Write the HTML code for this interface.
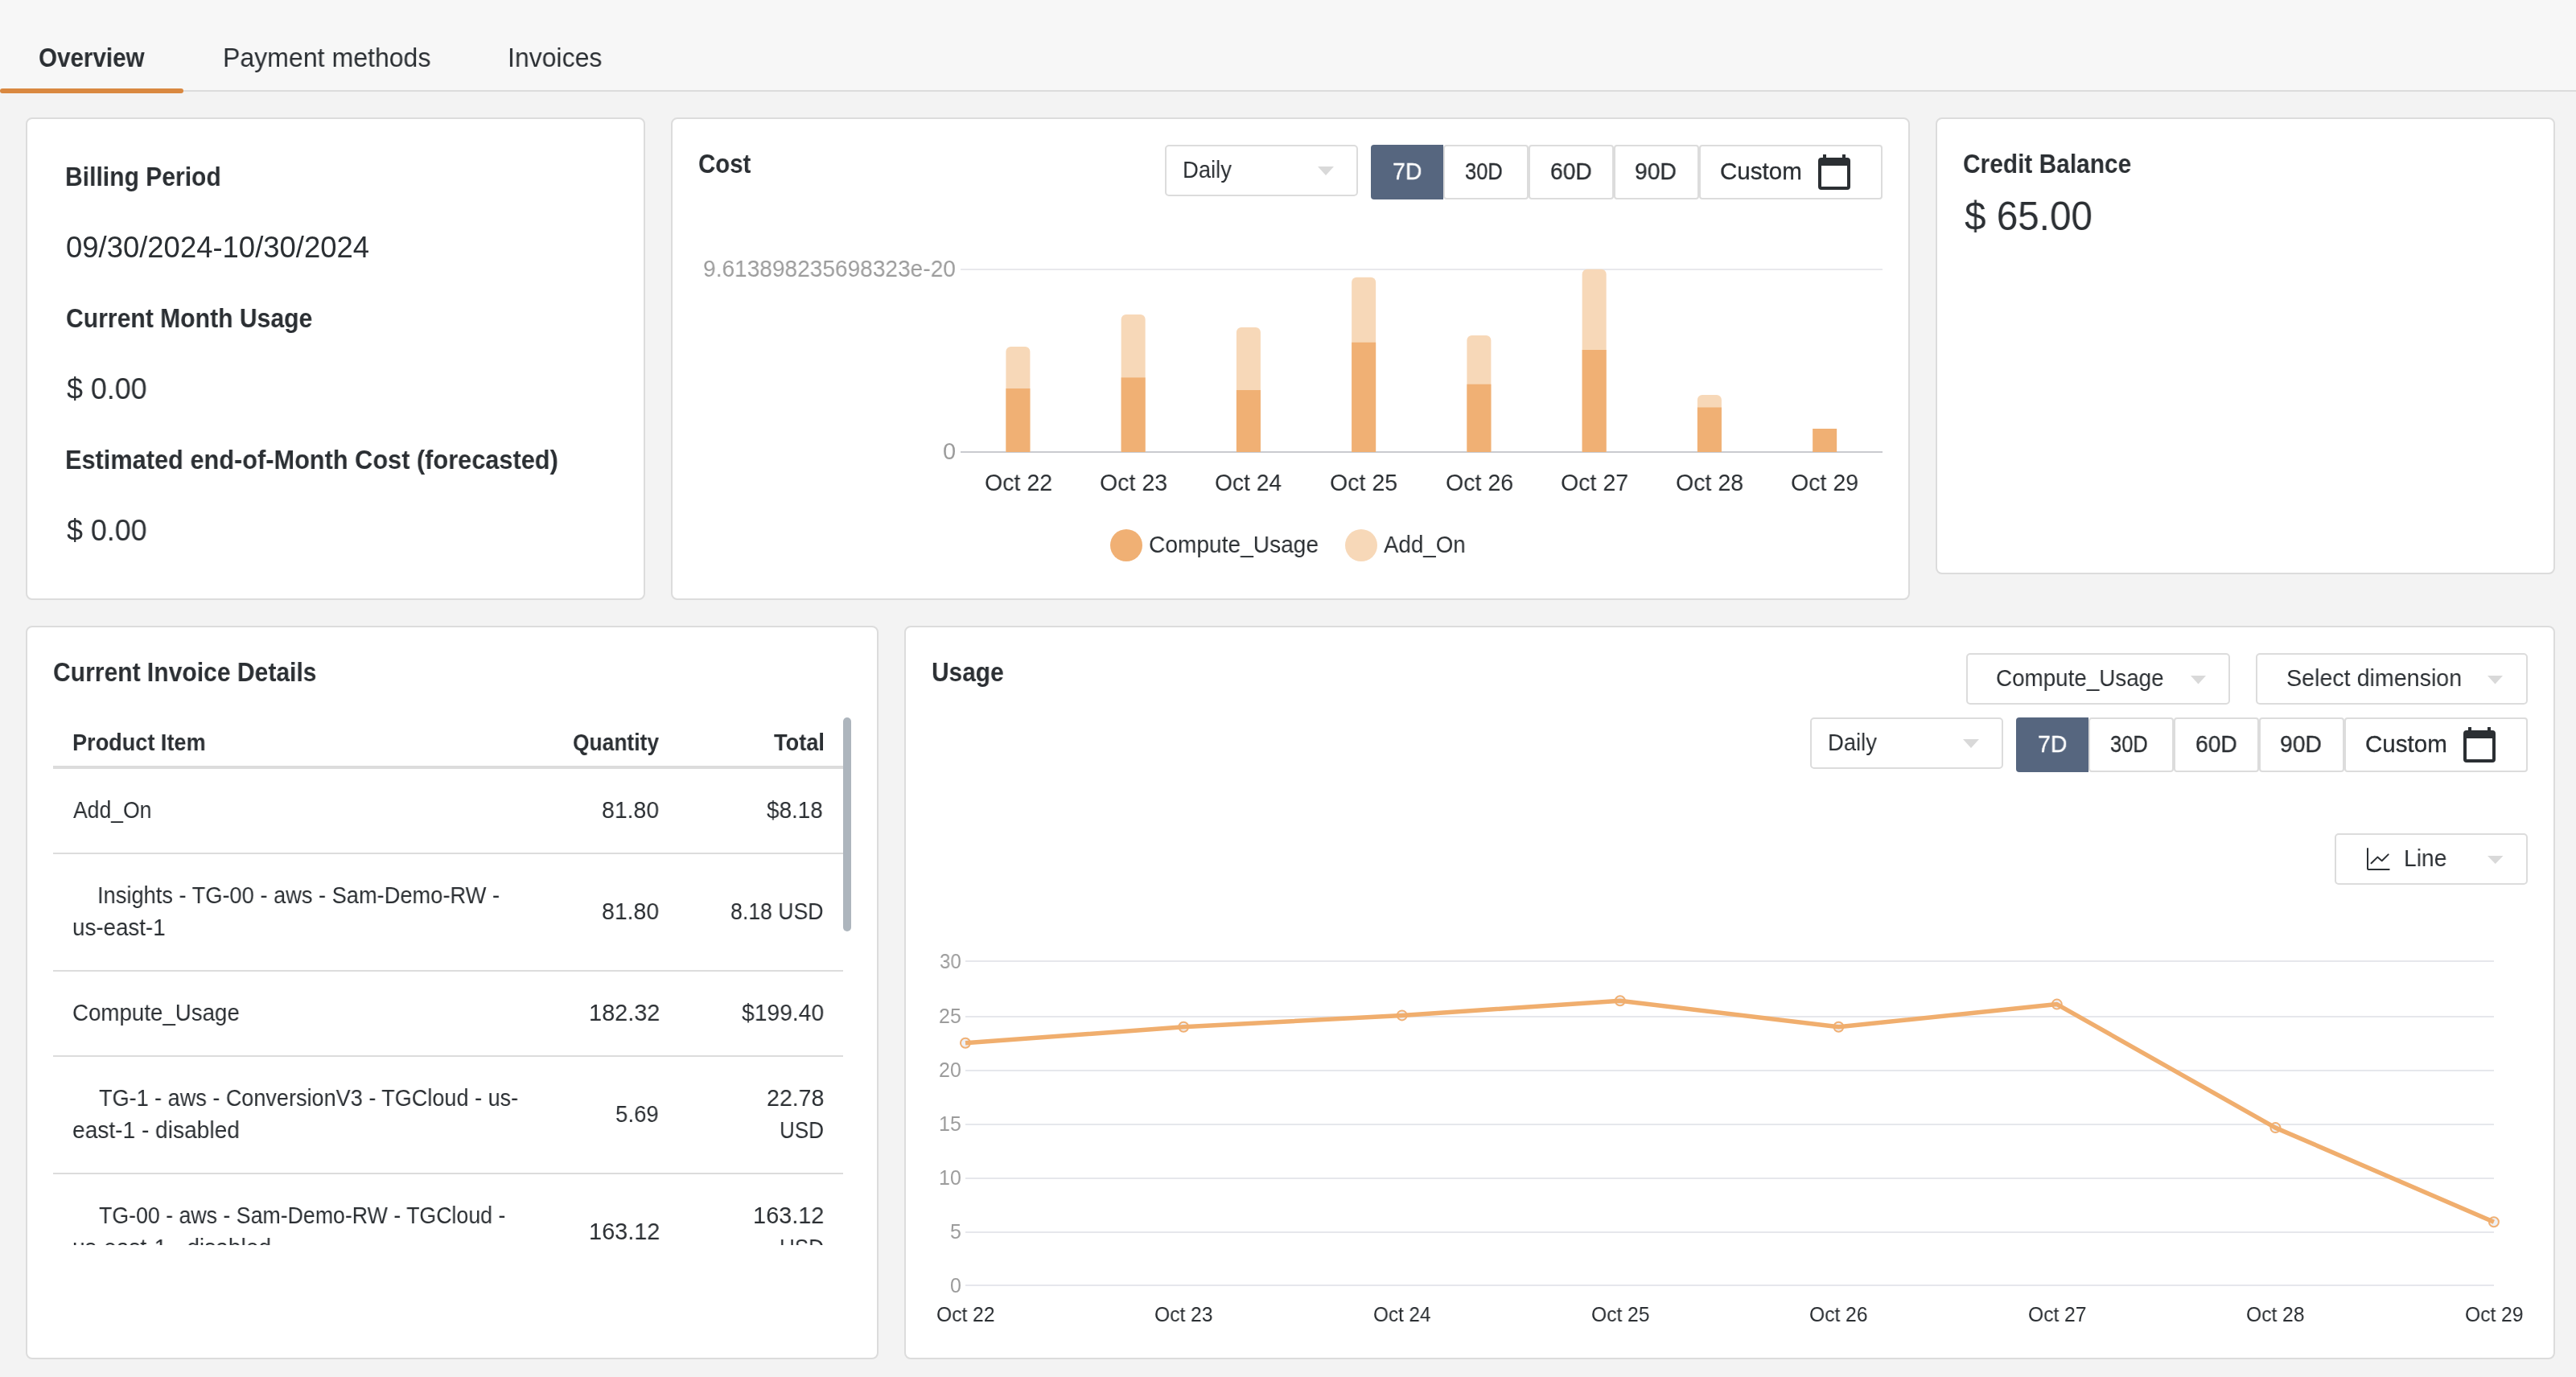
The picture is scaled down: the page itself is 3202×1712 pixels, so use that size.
<!DOCTYPE html>
<html><head><meta charset="utf-8"><title>Billing Overview</title>
<style>
html,body{margin:0;padding:0;width:3202px;height:1712px;overflow:hidden;background:#f3f3f3}
body{position:relative;font-family:"Liberation Sans",sans-serif}
.t{position:absolute;white-space:pre;line-height:1;transform-origin:0 0;will-change:transform}
</style></head><body>
<div style="position:absolute;left:0px;top:0px;width:3202px;height:112px;background:#f7f7f7"></div>
<div style="position:absolute;left:0px;top:112px;width:3202px;height:2px;background:#dcdcdc"></div>
<div style="position:absolute;left:0px;top:114px;width:3202px;height:1598px;background:#f3f3f3"></div>
<div style="position:absolute;left:0px;top:110px;width:228px;height:6px;background:#d98840;border-radius:3px"></div>
<div class="t" style="left:48.10px;top:55.00px;font-size:33px;font-weight:bold;color:#2b2f33;transform:scaleX(0.8967);">Overview</div>
<div class="t" style="left:276.66px;top:55.00px;font-size:33px;font-weight:normal;color:#2b2f33;transform:scaleX(0.9717);">Payment methods</div>
<div class="t" style="left:631.49px;top:55.00px;font-size:33px;font-weight:normal;color:#2b2f33;transform:scaleX(0.9697);">Invoices</div>
<div style="position:absolute;left:32px;top:146px;width:770px;height:600px;background:#fff;border:2px solid #dcdcdc;border-radius:8px;box-sizing:border-box"></div>
<div style="position:absolute;left:834px;top:146px;width:1540px;height:600px;background:#fff;border:2px solid #dcdcdc;border-radius:8px;box-sizing:border-box"></div>
<div style="position:absolute;left:2406px;top:146px;width:770px;height:568px;background:#fff;border:2px solid #dcdcdc;border-radius:8px;box-sizing:border-box"></div>
<div style="position:absolute;left:32px;top:778px;width:1060px;height:912px;background:#fff;border:2px solid #dcdcdc;border-radius:8px;box-sizing:border-box"></div>
<div style="position:absolute;left:1124px;top:778px;width:2052px;height:912px;background:#fff;border:2px solid #dcdcdc;border-radius:8px;box-sizing:border-box"></div>
<div class="t" style="left:81.18px;top:203.00px;font-size:33px;font-weight:bold;color:#2b2f33;transform:scaleX(0.9112);">Billing Period</div>
<div class="t" style="left:81.99px;top:290.00px;font-size:36px;font-weight:normal;color:#2b2f33;transform:scaleX(1.0126);">09/30/2024-10/30/2024</div>
<div class="t" style="left:82.09px;top:379.00px;font-size:33px;font-weight:bold;color:#2b2f33;transform:scaleX(0.9127);">Current Month Usage</div>
<div class="t" style="left:83.20px;top:466.00px;font-size:36px;font-weight:normal;color:#2b2f33;transform:scaleX(0.9953);">$ 0.00</div>
<div class="t" style="left:81.14px;top:555.00px;font-size:33px;font-weight:bold;color:#2b2f33;transform:scaleX(0.9310);">Estimated end-of-Month Cost (forecasted)</div>
<div class="t" style="left:83.20px;top:642.00px;font-size:36px;font-weight:normal;color:#2b2f33;transform:scaleX(0.9953);">$ 0.00</div>
<div class="t" style="left:868.11px;top:187.00px;font-size:33px;font-weight:bold;color:#2b2f33;transform:scaleX(0.8916);">Cost</div>
<div style="position:absolute;left:1448px;top:180px;width:240px;height:64px;background:#fff;border:2px solid #dcdcdc;border-radius:5px;box-sizing:border-box"></div>
<div class="t" style="left:1470.31px;top:197.00px;font-size:29px;font-weight:normal;color:#2b2f33;transform:scaleX(0.9451);">Daily</div>
<svg style="position:absolute;left:1636px;top:205px" width="24" height="15"><polygon points="2,2 22,2 12.0,13" fill="#d9d9d9"/></svg>
<div style="position:absolute;left:1704px;top:180px;width:90px;height:68px;background:#56667f;border-radius:4px 0 0 4px"></div>
<div style="position:absolute;left:1794px;top:180px;width:106px;height:68px;background:#fff;border:2px solid #dcdcdc;border-radius:4px;box-sizing:border-box"></div>
<div style="position:absolute;left:1900px;top:180px;width:106px;height:68px;background:#fff;border:2px solid #dcdcdc;border-radius:4px;box-sizing:border-box"></div>
<div style="position:absolute;left:2006px;top:180px;width:106px;height:68px;background:#fff;border:2px solid #dcdcdc;border-radius:4px;box-sizing:border-box"></div>
<div style="position:absolute;left:2112px;top:180px;width:228px;height:68px;background:#fff;border:2px solid #dcdcdc;border-radius:4px;box-sizing:border-box"></div>
<div class="t" style="left:1731.02px;top:199.00px;font-size:29px;font-weight:normal;color:#fff;transform:scaleX(0.9793);-webkit-text-stroke:0.3px #fff;">7D</div>
<div class="t" style="left:1820.82px;top:199.00px;font-size:29px;font-weight:normal;color:#2b2f33;transform:scaleX(0.8779);-webkit-text-stroke:0.3px #2b2f33;">30D</div>
<div class="t" style="left:1926.63px;top:199.00px;font-size:29px;font-weight:normal;color:#2b2f33;transform:scaleX(0.9716);-webkit-text-stroke:0.3px #2b2f33;">60D</div>
<div class="t" style="left:2032.33px;top:199.00px;font-size:29px;font-weight:normal;color:#2b2f33;transform:scaleX(0.9735);-webkit-text-stroke:0.3px #2b2f33;">90D</div>
<div class="t" style="left:2138.08px;top:199.00px;font-size:29px;font-weight:normal;color:#2b2f33;transform:scaleX(1.0189);-webkit-text-stroke:0.3px #2b2f33;">Custom</div>
<svg style="position:absolute;left:2260px;top:192px" width="40" height="44" viewBox="0 0 40 44">
<rect x="6" y="0" width="4" height="6" fill="#2b2f33"/><rect x="30" y="0" width="4" height="6" fill="#2b2f33"/>
<path d="M4 4 H36 A4 4 0 0 1 40 8 V40 A4 4 0 0 1 36 44 H4 A4 4 0 0 1 0 40 V8 A4 4 0 0 1 4 4 Z M4 14 V40 H36 V14 Z" fill="#2b2f33" fill-rule="evenodd"/>
</svg>
<div style="position:absolute;left:1194px;top:334px;width:1146px;height:2px;background:#e8e8ec"></div>
<div style="position:absolute;left:1194px;top:561px;width:1146px;height:2px;background:#c9cacf"></div>
<div class="t" style="left:873.63px;top:320.00px;font-size:29px;font-weight:normal;color:#9c9c9c;transform:scaleX(0.9682);">9.613898235698323e-20</div>
<div class="t" style="left:1171.70px;top:547.00px;font-size:29px;font-weight:normal;color:#9c9c9c;">0</div>
<div class="t" style="left:1223.62px;top:586.00px;font-size:29px;font-weight:normal;color:#2b2f33;transform:scaleX(0.9844);">Oct 22</div>
<div class="t" style="left:1366.87px;top:586.00px;font-size:29px;font-weight:normal;color:#2b2f33;transform:scaleX(0.9844);">Oct 23</div>
<div class="t" style="left:1510.13px;top:586.00px;font-size:29px;font-weight:normal;color:#2b2f33;transform:scaleX(0.9727);">Oct 24</div>
<div class="t" style="left:1653.37px;top:586.00px;font-size:29px;font-weight:normal;color:#2b2f33;transform:scaleX(0.9844);">Oct 25</div>
<div class="t" style="left:1796.62px;top:586.00px;font-size:29px;font-weight:normal;color:#2b2f33;transform:scaleX(0.9844);">Oct 26</div>
<div class="t" style="left:1939.87px;top:586.00px;font-size:29px;font-weight:normal;color:#2b2f33;transform:scaleX(0.9844);">Oct 27</div>
<div class="t" style="left:2083.12px;top:586.00px;font-size:29px;font-weight:normal;color:#2b2f33;transform:scaleX(0.9844);">Oct 28</div>
<div class="t" style="left:2226.37px;top:586.00px;font-size:29px;font-weight:normal;color:#2b2f33;transform:scaleX(0.9844);">Oct 29</div>
<svg style="position:absolute;left:1100px;top:300px" width="1300" height="270"><path d="M150.40 262 V137.00 A6 6 0 0 1 156.40 131.00 H174.40 A6 6 0 0 1 180.40 137.00 V262 Z" fill="#f7d8b8"/><rect x="150.40" y="183.00" width="30" height="79.00" fill="#f0b074"/><path d="M293.65 262 V97.00 A6 6 0 0 1 299.65 91.00 H317.65 A6 6 0 0 1 323.65 97.00 V262 Z" fill="#f7d8b8"/><rect x="293.65" y="169.40" width="30" height="92.60" fill="#f0b074"/><path d="M436.90 262 V113.00 A6 6 0 0 1 442.90 107.00 H460.90 A6 6 0 0 1 466.90 113.00 V262 Z" fill="#f7d8b8"/><rect x="436.90" y="185.00" width="30" height="77.00" fill="#f0b074"/><path d="M580.15 262 V50.70 A6 6 0 0 1 586.15 44.70 H604.15 A6 6 0 0 1 610.15 50.70 V262 Z" fill="#f7d8b8"/><rect x="580.15" y="125.70" width="30" height="136.30" fill="#f0b074"/><path d="M723.40 262 V123.00 A6 6 0 0 1 729.40 117.00 H747.40 A6 6 0 0 1 753.40 123.00 V262 Z" fill="#f7d8b8"/><rect x="723.40" y="177.70" width="30" height="84.30" fill="#f0b074"/><path d="M866.65 262 V40.70 A6 6 0 0 1 872.65 34.70 H890.65 A6 6 0 0 1 896.65 40.70 V262 Z" fill="#f7d8b8"/><rect x="866.65" y="135.00" width="30" height="127.00" fill="#f0b074"/><path d="M1009.90 262 V197.00 A6 6 0 0 1 1015.90 191.00 H1033.90 A6 6 0 0 1 1039.90 197.00 V262 Z" fill="#f7d8b8"/><rect x="1009.90" y="206.50" width="30" height="55.50" fill="#f0b074"/><rect x="1153.15" y="233.00" width="30" height="29.00" fill="#f0b074"/></svg>
<div style="position:absolute;left:1380px;top:658px;width:40px;height:40px;border-radius:50%;background:#f0b074"></div>
<div style="position:absolute;left:1672px;top:658px;width:40px;height:40px;border-radius:50%;background:#f7d8b8"></div>
<div class="t" style="left:1428.03px;top:663.00px;font-size:29px;font-weight:normal;color:#2b2f33;transform:scaleX(0.9698);">Compute_Usage</div>
<div class="t" style="left:1720.40px;top:663.00px;font-size:29px;font-weight:normal;color:#2b2f33;transform:scaleX(0.9555);">Add_On</div>
<div class="t" style="left:2440.09px;top:187.00px;font-size:33px;font-weight:bold;color:#2b2f33;transform:scaleX(0.9054);">Credit Balance</div>
<div class="t" style="left:2441.70px;top:244.00px;font-size:50px;font-weight:normal;color:#2b2f33;transform:scaleX(0.9526);">$ 65.00</div>
<div class="t" style="left:65.79px;top:819.00px;font-size:33px;font-weight:bold;color:#2b2f33;transform:scaleX(0.9110);">Current Invoice Details</div>
<div class="t" style="left:90.07px;top:909.00px;font-size:29px;font-weight:bold;color:#2b2f33;transform:scaleX(0.9343);">Product Item</div>
<div class="t" style="left:712.09px;top:909.00px;font-size:29px;font-weight:bold;color:#2b2f33;transform:scaleX(0.9100);">Quantity</div>
<div class="t" style="left:961.70px;top:909.00px;font-size:29px;font-weight:bold;color:#2b2f33;transform:scaleX(0.9376);">Total</div>
<div style="position:absolute;left:66px;top:952px;width:982px;height:4px;background:#dcdcdc"></div>
<div style="position:absolute;left:1048px;top:892px;width:10px;height:266px;background:#adb5bd;border-radius:5px"></div>
<div style="position:absolute;left:0;top:956px;width:1092px;height:592px;overflow:hidden">
<div style="position:absolute;left:0;top:-956px;width:1092px;height:1712px">
<div class="t" style="left:91.00px;top:993.00px;font-size:29px;font-weight:normal;color:#2b2f33;transform:scaleX(0.9156);">Add_On</div>
<div class="t" style="left:748.32px;top:993.00px;font-size:29px;font-weight:normal;color:#2b2f33;transform:scaleX(0.9795);">81.80</div>
<div class="t" style="left:953.40px;top:993.00px;font-size:29px;font-weight:normal;color:#2b2f33;transform:scaleX(0.9602);">$8.18</div>
<div style="position:absolute;left:66px;top:1060px;width:982px;height:2px;background:#dcdcdc"></div>
<div class="t" style="left:120.92px;top:1099.00px;font-size:29px;font-weight:normal;color:#2b2f33;transform:scaleX(0.9393);">Insights - TG-00 - aws - Sam-Demo-RW -</div>
<div class="t" style="left:90.04px;top:1139.00px;font-size:29px;font-weight:normal;color:#2b2f33;transform:scaleX(0.9566);">us-east-1</div>
<div class="t" style="left:748.32px;top:1119.00px;font-size:29px;font-weight:normal;color:#2b2f33;transform:scaleX(0.9795);">81.80</div>
<div class="t" style="left:907.88px;top:1119.00px;font-size:29px;font-weight:normal;color:#2b2f33;transform:scaleX(0.9185);">8.18 USD</div>
<div style="position:absolute;left:66px;top:1206px;width:982px;height:2px;background:#dcdcdc"></div>
<div class="t" style="left:90.05px;top:1245.00px;font-size:29px;font-weight:normal;color:#2b2f33;transform:scaleX(0.9550);">Compute_Usage</div>
<div class="t" style="left:731.81px;top:1245.00px;font-size:29px;font-weight:normal;color:#2b2f33;transform:scaleX(0.9957);">182.32</div>
<div class="t" style="left:922.00px;top:1245.00px;font-size:29px;font-weight:normal;color:#2b2f33;transform:scaleX(0.9740);">$199.40</div>
<div style="position:absolute;left:66px;top:1312px;width:982px;height:2px;background:#dcdcdc"></div>
<div class="t" style="left:122.80px;top:1351.00px;font-size:29px;font-weight:normal;color:#2b2f33;transform:scaleX(0.9328);">TG-1 - aws - ConversionV3 - TGCloud - us-</div>
<div class="t" style="left:90.03px;top:1391.00px;font-size:29px;font-weight:normal;color:#2b2f33;transform:scaleX(0.9695);">east-1 - disabled</div>
<div class="t" style="left:765.35px;top:1371.00px;font-size:29px;font-weight:normal;color:#2b2f33;transform:scaleX(0.9519);">5.69</div>
<div class="t" style="left:952.82px;top:1351.00px;font-size:29px;font-weight:normal;color:#2b2f33;transform:scaleX(0.9824);">22.78</div>
<div class="t" style="left:968.91px;top:1391.00px;font-size:29px;font-weight:normal;color:#2b2f33;transform:scaleX(0.8973);">USD</div>
<div style="position:absolute;left:66px;top:1458px;width:982px;height:2px;background:#dcdcdc"></div>
<div class="t" style="left:122.80px;top:1497.00px;font-size:29px;font-weight:normal;color:#2b2f33;transform:scaleX(0.9215);">TG-00 - aws - Sam-Demo-RW - TGCloud -</div>
<div class="t" style="left:90.03px;top:1537.00px;font-size:29px;font-weight:normal;color:#2b2f33;transform:scaleX(0.9701);">us-east-1 - disabled</div>
<div class="t" style="left:731.81px;top:1517.00px;font-size:29px;font-weight:normal;color:#2b2f33;transform:scaleX(0.9957);">163.12</div>
<div class="t" style="left:935.81px;top:1497.00px;font-size:29px;font-weight:normal;color:#2b2f33;transform:scaleX(0.9957);">163.12</div>
<div class="t" style="left:968.91px;top:1537.00px;font-size:29px;font-weight:normal;color:#2b2f33;transform:scaleX(0.8973);">USD</div>
</div></div>
<div class="t" style="left:1158.10px;top:819.00px;font-size:33px;font-weight:bold;color:#2b2f33;transform:scaleX(0.9049);">Usage</div>
<div style="position:absolute;left:2444px;top:812px;width:328px;height:64px;background:#fff;border:2px solid #dcdcdc;border-radius:5px;box-sizing:border-box"></div>
<div class="t" style="left:2481.44px;top:829.00px;font-size:29px;font-weight:normal;color:#2b2f33;transform:scaleX(0.9587);">Compute_Usage</div>
<svg style="position:absolute;left:2720.6px;top:837.5px" width="23.0" height="14.5"><polygon points="2,2 21.0,2 11.5,12.5" fill="#d9d9d9"/></svg>
<div style="position:absolute;left:2804px;top:812px;width:338px;height:64px;background:#fff;border:2px solid #dcdcdc;border-radius:5px;box-sizing:border-box"></div>
<div class="t" style="left:2841.81px;top:829.00px;font-size:29px;font-weight:normal;color:#2b2f33;transform:scaleX(0.9876);">Select dimension</div>
<svg style="position:absolute;left:3090.3px;top:837.5px" width="23.0" height="14.5"><polygon points="2,2 21.0,2 11.5,12.5" fill="#d9d9d9"/></svg>
<div style="position:absolute;left:2250px;top:892px;width:240px;height:64px;background:#fff;border:2px solid #dcdcdc;border-radius:5px;box-sizing:border-box"></div>
<div class="t" style="left:2272.31px;top:909.00px;font-size:29px;font-weight:normal;color:#2b2f33;transform:scaleX(0.9451);">Daily</div>
<svg style="position:absolute;left:2438px;top:917px" width="24" height="15"><polygon points="2,2 22,2 12.0,13" fill="#d9d9d9"/></svg>
<div style="position:absolute;left:2506px;top:892px;width:90px;height:68px;background:#56667f;border-radius:4px 0 0 4px"></div>
<div style="position:absolute;left:2596px;top:892px;width:106px;height:68px;background:#fff;border:2px solid #dcdcdc;border-radius:4px;box-sizing:border-box"></div>
<div style="position:absolute;left:2702px;top:892px;width:106px;height:68px;background:#fff;border:2px solid #dcdcdc;border-radius:4px;box-sizing:border-box"></div>
<div style="position:absolute;left:2808px;top:892px;width:106px;height:68px;background:#fff;border:2px solid #dcdcdc;border-radius:4px;box-sizing:border-box"></div>
<div style="position:absolute;left:2914px;top:892px;width:228px;height:68px;background:#fff;border:2px solid #dcdcdc;border-radius:4px;box-sizing:border-box"></div>
<div class="t" style="left:2533.02px;top:911.00px;font-size:29px;font-weight:normal;color:#fff;transform:scaleX(0.9793);-webkit-text-stroke:0.3px #fff;">7D</div>
<div class="t" style="left:2622.82px;top:911.00px;font-size:29px;font-weight:normal;color:#2b2f33;transform:scaleX(0.8779);-webkit-text-stroke:0.3px #2b2f33;">30D</div>
<div class="t" style="left:2728.63px;top:911.00px;font-size:29px;font-weight:normal;color:#2b2f33;transform:scaleX(0.9716);-webkit-text-stroke:0.3px #2b2f33;">60D</div>
<div class="t" style="left:2834.33px;top:911.00px;font-size:29px;font-weight:normal;color:#2b2f33;transform:scaleX(0.9735);-webkit-text-stroke:0.3px #2b2f33;">90D</div>
<div class="t" style="left:2940.08px;top:911.00px;font-size:29px;font-weight:normal;color:#2b2f33;transform:scaleX(1.0189);-webkit-text-stroke:0.3px #2b2f33;">Custom</div>
<svg style="position:absolute;left:3062px;top:904px" width="40" height="44" viewBox="0 0 40 44">
<rect x="6" y="0" width="4" height="6" fill="#2b2f33"/><rect x="30" y="0" width="4" height="6" fill="#2b2f33"/>
<path d="M4 4 H36 A4 4 0 0 1 40 8 V40 A4 4 0 0 1 36 44 H4 A4 4 0 0 1 0 40 V8 A4 4 0 0 1 4 4 Z M4 14 V40 H36 V14 Z" fill="#2b2f33" fill-rule="evenodd"/>
</svg>
<div style="position:absolute;left:2902px;top:1036px;width:240px;height:64px;background:#fff;border:2px solid #dcdcdc;border-radius:5px;box-sizing:border-box"></div>
<svg style="position:absolute;left:2938px;top:1050px" width="40" height="40" viewBox="0 0 40 40">
<path d="M5 5 V30 A1 1 0 0 0 6 31 H31.7" fill="none" stroke="#2b2f33" stroke-width="2" stroke-linecap="round" stroke-linejoin="round"/>
<path d="M9.5 23.2 L17.3 15.6 L22.7 20.2 L30.7 12.4" fill="none" stroke="#2b2f33" stroke-width="2" stroke-linecap="round" stroke-linejoin="round"/>
</svg>
<div class="t" style="left:2987.55px;top:1053.00px;font-size:29px;font-weight:normal;color:#2b2f33;transform:scaleX(0.9729);">Line</div>
<svg style="position:absolute;left:3090.2px;top:1062px" width="23.5" height="14"><polygon points="2,2 21.5,2 11.75,12" fill="#d9d9d9"/></svg>
<div style="position:absolute;left:1200px;top:1194px;width:1900px;height:2px;background:#e6e7ec"></div>
<div class="t" style="left:1167.80px;top:1183.00px;font-size:25px;font-weight:normal;color:#9c9c9c;transform:scaleX(0.9590);">30</div>
<div style="position:absolute;left:1200px;top:1263px;width:1900px;height:2px;background:#e6e7ec"></div>
<div class="t" style="left:1166.80px;top:1251.00px;font-size:25px;font-weight:normal;color:#9c9c9c;transform:scaleX(0.9960);">25</div>
<div style="position:absolute;left:1200px;top:1330px;width:1900px;height:2px;background:#e6e7ec"></div>
<div class="t" style="left:1166.80px;top:1318.00px;font-size:25px;font-weight:normal;color:#9c9c9c;transform:scaleX(0.9960);">20</div>
<div style="position:absolute;left:1200px;top:1397px;width:1900px;height:2px;background:#e6e7ec"></div>
<div class="t" style="left:1166.80px;top:1385.00px;font-size:25px;font-weight:normal;color:#9c9c9c;transform:scaleX(0.9960);">15</div>
<div style="position:absolute;left:1200px;top:1464px;width:1900px;height:2px;background:#e6e7ec"></div>
<div class="t" style="left:1166.80px;top:1452.00px;font-size:25px;font-weight:normal;color:#9c9c9c;transform:scaleX(0.9960);">10</div>
<div style="position:absolute;left:1200px;top:1531px;width:1900px;height:2px;background:#e6e7ec"></div>
<div class="t" style="left:1180.60px;top:1519.00px;font-size:25px;font-weight:normal;color:#9c9c9c;">5</div>
<div style="position:absolute;left:1200px;top:1597px;width:1900px;height:2px;background:#e6e7ec"></div>
<div class="t" style="left:1180.60px;top:1586.00px;font-size:25px;font-weight:normal;color:#9c9c9c;">0</div>
<div class="t" style="left:1163.72px;top:1622.00px;font-size:25px;font-weight:normal;color:#2b2f33;transform:scaleX(0.9841);">Oct 22</div>
<div class="t" style="left:1435.15px;top:1622.00px;font-size:25px;font-weight:normal;color:#2b2f33;transform:scaleX(0.9841);">Oct 23</div>
<div class="t" style="left:1706.59px;top:1622.00px;font-size:25px;font-weight:normal;color:#2b2f33;transform:scaleX(0.9706);">Oct 24</div>
<div class="t" style="left:1978.01px;top:1622.00px;font-size:25px;font-weight:normal;color:#2b2f33;transform:scaleX(0.9841);">Oct 25</div>
<div class="t" style="left:2249.44px;top:1622.00px;font-size:25px;font-weight:normal;color:#2b2f33;transform:scaleX(0.9841);">Oct 26</div>
<div class="t" style="left:2520.87px;top:1622.00px;font-size:25px;font-weight:normal;color:#2b2f33;transform:scaleX(0.9841);">Oct 27</div>
<div class="t" style="left:2792.30px;top:1622.00px;font-size:25px;font-weight:normal;color:#2b2f33;transform:scaleX(0.9841);">Oct 28</div>
<div class="t" style="left:3063.73px;top:1622.00px;font-size:25px;font-weight:normal;color:#2b2f33;transform:scaleX(0.9841);">Oct 29</div>
<svg style="position:absolute;left:1100px;top:1150px" width="2100" height="500" viewBox="0 0 2100 500">
<circle cx="100" cy="146.79999999999995" r="6" fill="#eef0f5" stroke="#f0b074" stroke-width="2"/><circle cx="371.20000000000005" cy="126.79999999999995" r="6" fill="#eef0f5" stroke="#f0b074" stroke-width="2"/><circle cx="642.7" cy="112.40000000000009" r="6" fill="#eef0f5" stroke="#f0b074" stroke-width="2"/><circle cx="913.8" cy="94.20000000000005" r="6" fill="#eef0f5" stroke="#f0b074" stroke-width="2"/><circle cx="1185.4" cy="126.79999999999995" r="6" fill="#eef0f5" stroke="#f0b074" stroke-width="2"/><circle cx="1456.8000000000002" cy="98.59999999999991" r="6" fill="#eef0f5" stroke="#f0b074" stroke-width="2"/><circle cx="1728.4" cy="252.0999999999999" r="6" fill="#eef0f5" stroke="#f0b074" stroke-width="2"/><circle cx="1999.9" cy="369.20000000000005" r="6" fill="#eef0f5" stroke="#f0b074" stroke-width="2"/>
<polyline points="100,146.79999999999995 371.20000000000005,126.79999999999995 642.7,112.40000000000009 913.8,94.20000000000005 1185.4,126.79999999999995 1456.8000000000002,98.59999999999991 1728.4,252.0999999999999 1999.9,369.20000000000005" fill="none" stroke="#f0ae6e" stroke-width="5.5" stroke-linejoin="round"/>
</svg>
</body></html>
